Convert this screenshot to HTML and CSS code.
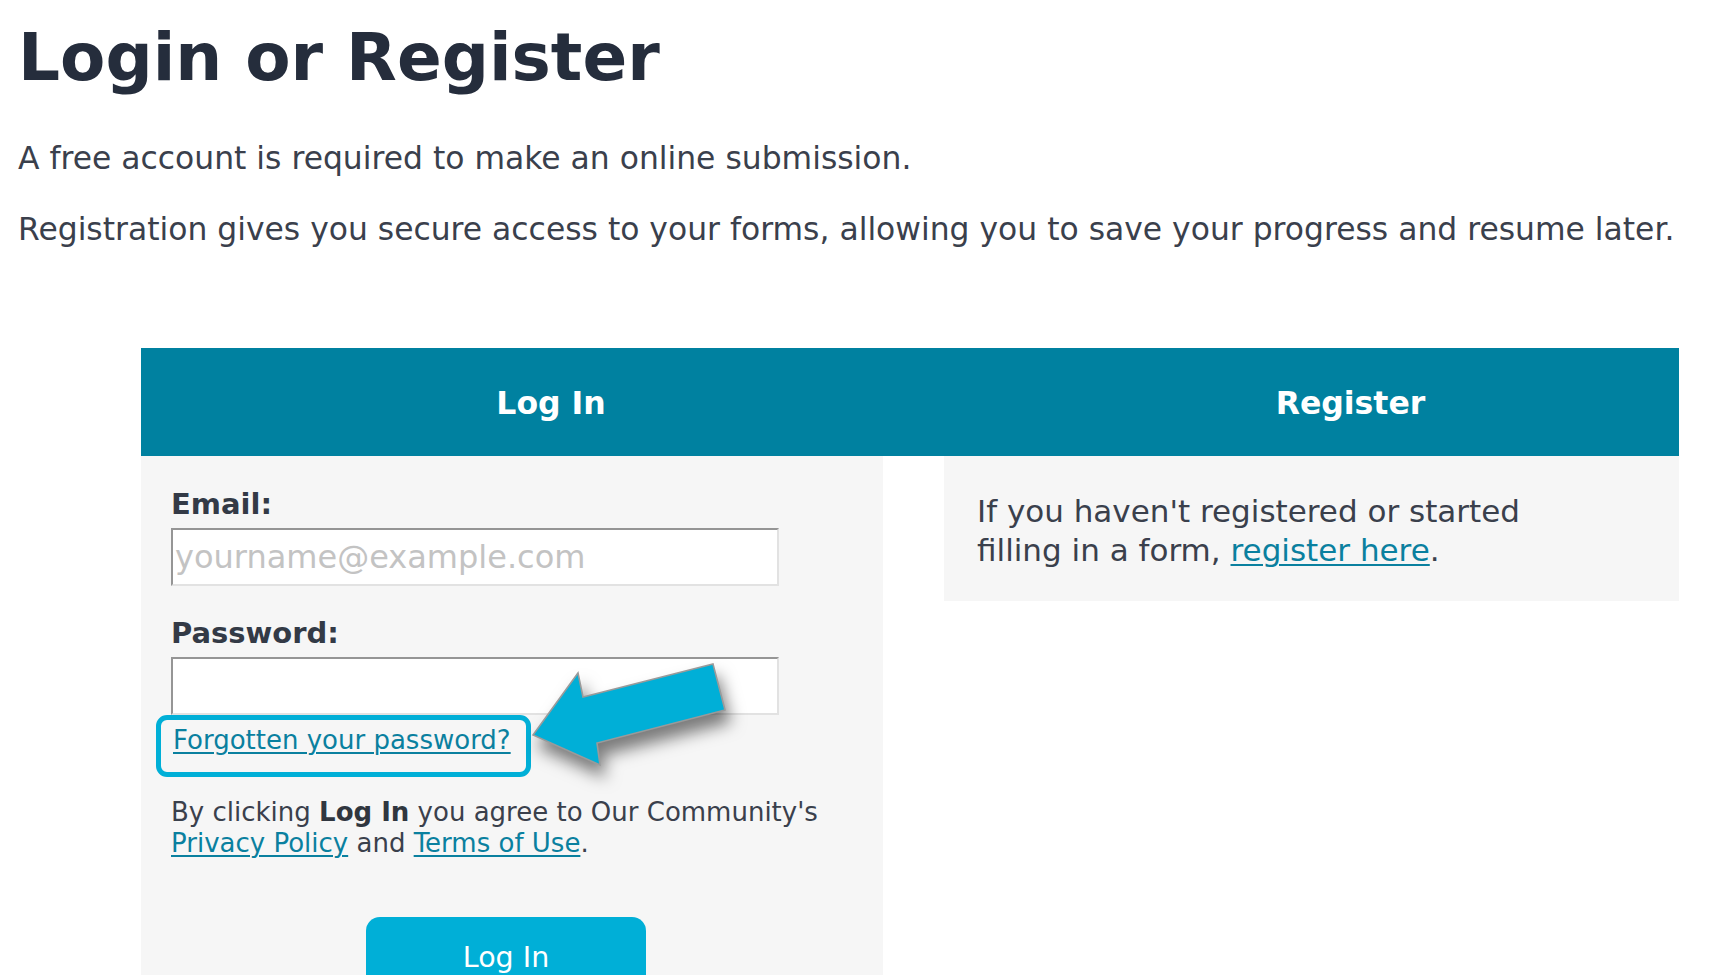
FILE: index.html
```html
<!DOCTYPE html>
<html lang="en">
<head>
<meta charset="utf-8">
<title>Login or Register</title>
<link rel="stylesheet" href="styles.css">
</head>
<body>
<main class="page">
  <h1 class="title">Login or Register</h1>
  <p class="intro">A free account is required to make an online submission.</p>
  <p class="intro">Registration gives you secure access to your forms, allowing you to save your progress and resume later.</p>

  <section class="auth">
    <div class="auth-tabs">
      <h2 class="tab">Log In</h2>
      <h2 class="tab">Register</h2>
    </div>
    <div class="auth-body">
      <form class="login-panel" action="#">
        <label class="field-label" for="email">Email:</label>
        <input class="field-input" id="email" type="email" placeholder="yourname@example.com">
        <label class="field-label label-password" for="password">Password:</label>
        <input class="field-input" id="password" type="password">
        <div class="forgot-box"><a class="link forgot-link" href="#">Forgotten your password?</a></div>
        <p class="terms">By clicking <strong>Log In</strong> you agree to Our Community's <a class="link" href="#">Privacy Policy</a> and <a class="link" href="#">Terms of Use</a>.</p>
        <div class="btn-row"><button class="btn-login" type="button">Log In</button></div>
        <svg class="callout-arrow" width="220" height="160" viewBox="0 0 220 160" aria-hidden="true">
          <polygon points="12,79 57,17 62,41 192,8 204,54 76,87 79,109" fill="#00afd7" stroke="#9a9a9a" stroke-width="1.6" stroke-linejoin="miter"/>
        </svg>
      </form>
      <div class="register-panel">
        <p class="register-text">If you haven't registered or started filling in a form, <a class="link" href="#">register here</a>.</p>
      </div>
    </div>
  </section>
</main>
</body>
</html>
```
FILE: styles.css
```css
html, body {
  margin: 0;
  padding: 0;
  background: #ffffff;
  overflow: hidden;
}

body {
  font-family: "DejaVu Sans", "Noto Sans", sans-serif;
  color: #3a404c;
}

.page {
  padding: 18px 16px 0 18px;
}

.title {
  margin: 0;
  font-size: 66px;
  line-height: 80px;
  font-weight: 700;
  color: #252d3c;
}

.intro {
  margin: 40px 0 0;
  font-size: 31.4px;
  line-height: 40px;
  color: #3a404c;
  white-space: nowrap;
}

.intro + .intro {
  margin-top: 31px;
}

.auth {
  margin: 99px 17px 0 123px;
}

.auth-tabs {
  display: grid;
  grid-template-columns: 742px 1fr;
  column-gap: 61px;
  height: 108px;
  background: #0081a0;
}

.tab {
  margin: 0;
  padding: 3px 0 0 78px;
  font-size: 31.5px;
  line-height: 104px;
  font-weight: 700;
  color: #ffffff;
  text-align: center;
}

.auth-body {
  display: grid;
  grid-template-columns: 742px 1fr;
  column-gap: 61px;
  align-items: start;
}

.login-panel {
  position: relative;
  margin: 0;
  padding: 30px 30px 0;
  background: #f6f6f6;
}

.field-label {
  display: block;
  font-size: 29px;
  line-height: 36px;
  font-weight: 700;
  color: #333a46;
}

.label-password {
  margin-top: 29px;
}

.field-input {
  display: block;
  box-sizing: border-box;
  width: 608px;
  height: 58px;
  margin: 6px 0 0;
  padding: 0 2px;
  border: 2px solid;
  border-color: #959595 #e2e2e2 #e2e2e2 #959595;
  background: #ffffff;
  font-family: "DejaVu Sans", "Noto Sans", sans-serif;
  font-size: 32px;
  color: #3a404c;
  outline: none;
}

.field-input::placeholder {
  color: #c3c3c3;
}

.link {
  color: #0a809f;
  text-decoration: underline;
  text-decoration-thickness: 1.5px;
  text-underline-offset: 3px;
}

.forgot-box {
  width: max-content;
  margin: 0 0 0 -15px;
  padding: 5px 15px 17px 12px;
  border: 5px solid #00afd7;
  border-radius: 11px;
}

.forgot-link {
  font-size: 26px;
  line-height: 30px;
}

.terms {
  max-width: 680px;
  margin: 20px 0 0;
  font-size: 26px;
  line-height: 31px;
  color: #3a404c;
}

.terms strong {
  color: #30363f;
}

.btn-row {
  margin-top: 58px;
  padding-left: 195px;
}

.btn-login {
  display: block;
  width: 280px;
  padding: 21px 0 23px;
  border: 0;
  border-radius: 14px 14px 0 0;
  background: #00afd7;
  color: #ffffff;
  font-family: "DejaVu Sans", "Noto Sans", sans-serif;
  font-size: 28.5px;
  line-height: 40px;
}

.callout-arrow {
  position: absolute;
  left: 380px;
  top: 200px;
  overflow: visible;
  filter: drop-shadow(5px 12px 8px rgba(0, 0, 0, 0.5));
}

.register-panel {
  padding: 36px 34px 31px 33px;
  background: #f6f6f6;
}

.register-text {
  max-width: 600px;
  margin: 0;
  font-size: 31px;
  line-height: 39px;
  color: #3a404c;
}
```
